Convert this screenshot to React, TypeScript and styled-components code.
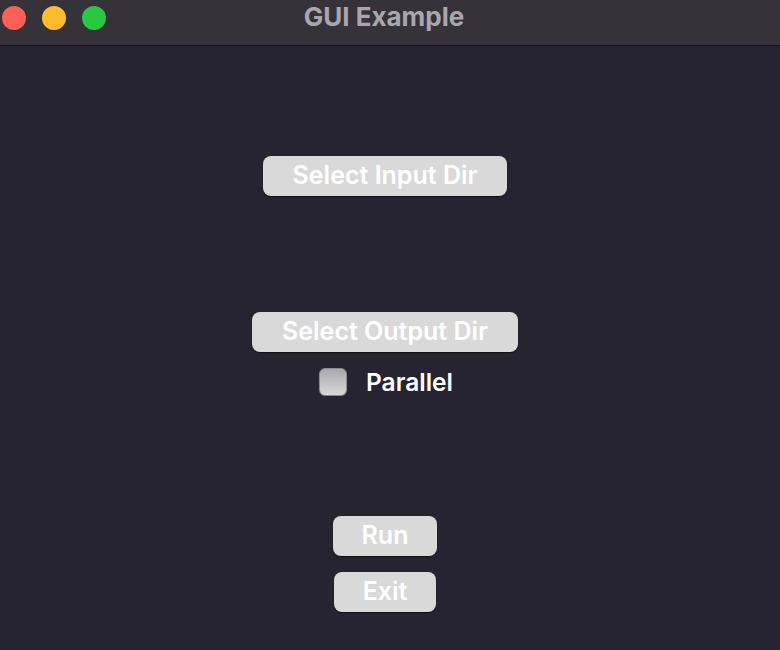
import React from 'react';
import styled, { createGlobalStyle } from 'styled-components';

const Global = createGlobalStyle`
  html, body {
    margin: 0;
    padding: 0;
    background: #262430;
  }
  body {
    font-family: Inter, "Liberation Sans", sans-serif;
  }
`;

const Window = styled.div`
  width: 780px;
  height: 650px;
  background: #262430;
  display: flex;
  flex-direction: column;
  overflow: hidden;
`;

const TitleBar = styled.div`
  height: 46px;
  box-sizing: border-box;
  background: #353339;
  border-bottom: 1px solid #111015;
  position: relative;
  display: flex;
  align-items: center;
  justify-content: center;
  padding-right: 12px;
`;

const Lights = styled.div`
  position: absolute;
  left: 2px;
  top: 6px;
  display: flex;
  gap: 16px;
`;

const Light = styled.span<{ $color: string }>`
  width: 24px;
  height: 24px;
  border-radius: 50%;
  background: ${(p) => p.$color};
`;

const Title = styled.div`
  color: #a9a7ae;
  font-size: 26px;
  font-weight: 700;
  margin-top: -12px;
`;

const Body = styled.div`
  display: flex;
  flex-direction: column;
  align-items: center;
  padding-right: 10px;
`;

const Button = styled.button<{ $top: number; $width: number }>`
  margin-top: ${(p) => p.$top}px;
  width: ${(p) => p.$width}px;
  height: 40px;
  border: none;
  border-radius: 8px;
  background: #d9d9d9;
  box-shadow: 0 1px 1px rgba(0, 0, 0, 0.6);
  color: #ffffff;
  font-family: Inter, "Liberation Sans", sans-serif;
  font-size: 25px;
  font-weight: 600;
  padding: 0 0 2px;
  cursor: pointer;
`;

const CheckRow = styled.label`
  margin-top: 16px;
  margin-left: 2px;
  display: flex;
  align-items: center;
  gap: 19px;
  color: #ffffff;
  font-size: 24.5px;
  font-weight: 600;
  height: 28px;
`;

const Box = styled.span`
  width: 28px;
  height: 28px;
  box-sizing: border-box;
  border-radius: 6px;
  background: linear-gradient(180deg, #a9a9ab 0%, #d8d8da 100%);
  border: 1px solid #8a8a90;
`;

export default function App() {
  return (
    <>
      <Global />
      <Window>
        <TitleBar>
          <Lights>
            <Light $color="#fe5f57" />
            <Light $color="#febc2e" />
            <Light $color="#28c840" />
          </Lights>
          <Title>GUI Example</Title>
        </TitleBar>
        <Body>
          <Button $top={110} $width={244}>Select Input Dir</Button>
          <Button $top={116} $width={266}>Select Output Dir</Button>
          <CheckRow>
            <Box />
            Parallel
          </CheckRow>
          <Button $top={120} $width={104}>Run</Button>
          <Button $top={16} $width={102}>Exit</Button>
        </Body>
      </Window>
    </>
  );
}
